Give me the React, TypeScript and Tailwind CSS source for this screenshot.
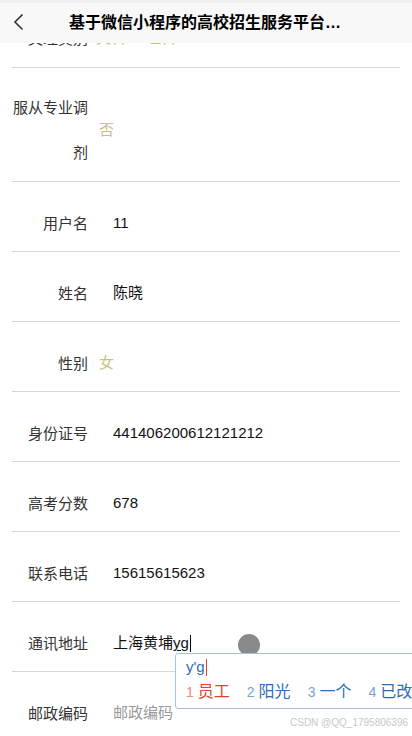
import React from 'react';

const FONT = '"Liberation Sans", "Noto Sans CJK SC", sans-serif';

type Row = { label: string; value?: string; kind: 'text' | 'radio' | 'placeholder' | 'address' };

const rows: Row[] = [
  { label: '用户名', value: '11', kind: 'text' },
  { label: '姓名', value: '陈晓', kind: 'text' },
  { label: '性别', value: '女', kind: 'radio' },
  { label: '身份证号', value: '441406200612121212', kind: 'text' },
  { label: '高考分数', value: '678', kind: 'text' },
  { label: '联系电话', value: '15615615623', kind: 'text' },
  { label: '通讯地址', value: '上海黄埔', kind: 'address' },
  { label: '邮政编码', value: '邮政编码', kind: 'placeholder' },
];

const Label = ({ children }: { children: React.ReactNode }) => (
  <div className="w-[76px] shrink-0 text-right text-[15px] leading-[45px] text-[#333]">{children}</div>
);

const FormRow = ({ row }: { row: Row }) => (
  <div className="flex items-center border-b border-[#d6d6d6] pt-[19px] pb-[5px]">
    <Label>{row.label}</Label>
    {row.kind === 'radio' && <span className="ml-[11px] text-[15px] text-[#c9c27f]">{row.value}</span>}
    {row.kind === 'text' && <span className="ml-[25px] text-[15px] text-[#111]">{row.value}</span>}
    {row.kind === 'placeholder' && <span className="ml-[25px] text-[15px] text-[#999]">{row.value}</span>}
    {row.kind === 'address' && (
      <span className="ml-[25px] flex items-center text-[15px] text-[#111]">
        {row.value}
        <span className="underline underline-offset-2">yg</span>
        <span className="ml-[1px] inline-block h-[17px] w-[1px] bg-black" />
      </span>
    )}
  </div>
);

export default function App() {
  return (
    <div className="relative h-[736px] w-[412px] overflow-hidden bg-white" style={{ fontFamily: FONT }}>
      <header className="absolute left-0 right-0 top-0 z-10 flex h-[43px] items-center border-t-[3px] border-[#efefef] bg-[#f8f8f8]">
        <svg className="absolute left-[12px] top-[10px]" width="14" height="18" viewBox="0 0 14 18" fill="none">
          <path d="M10.5 1.5 L3 9 L10.5 16.5" stroke="#333" strokeWidth="1.6" />
        </svg>
        <div className="mx-auto w-[274px] truncate text-[16px] font-bold text-black">
          基于微信小程序的高校招生服务平台管理系统
        </div>
      </header>

      <div className="mx-3 mt-[-3px]">
        <div className="flex items-center border-b border-[#d6d6d6] pt-[19px] pb-[6px]">
          <Label>文理类别</Label>
          <span className="ml-[8px] text-[15px] text-[#c9c27f]">文科</span>
          <span className="ml-[20px] text-[15px] text-[#c9c27f]">理科</span>
        </div>
        <div className="flex items-center border-b border-[#d6d6d6] pt-[17px] pb-[6px]">
          <Label>
            服从专业调
            <br />剂
          </Label>
          <span className="ml-[11px] text-[15px] text-[#c9c27f]">否</span>
        </div>
        {rows.map((r) => (
          <FormRow key={r.label} row={r} />
        ))}
      </div>

      <div className="absolute left-[238px] top-[634px] h-[22px] w-[22px] rounded-full bg-[#8a8a8a] blur-[0.6px]" />

      <div className="absolute left-[175px] top-[653px] h-[56px] w-[250px] rounded-[3px] border border-[#a9c1da] bg-white pl-[10px]">
        <div className="mt-[2px] flex items-center text-[15px] leading-[22px] text-[#2d6db5]">
          y'g
          <span className="ml-[1px] inline-block h-[17px] w-[1px] bg-[#e0452a]" />
        </div>
        <div className="mt-[2px] flex items-center whitespace-nowrap text-[16px] leading-[24px]">
          <span className="text-[14px] text-[#e88a74]">1</span>
          <span className="ml-[4px] text-[#e0452a]">员工</span>
          <span className="ml-[17px] text-[14px] text-[#7ba2cc]">2</span>
          <span className="ml-[4px] text-[#2d6db5]">阳光</span>
          <span className="ml-[17px] text-[14px] text-[#7ba2cc]">3</span>
          <span className="ml-[4px] text-[#2d6db5]">一个</span>
          <span className="ml-[17px] text-[14px] text-[#7ba2cc]">4</span>
          <span className="ml-[4px] text-[#2d6db5]">已改</span>
        </div>
      </div>

      <div className="absolute bottom-[6px] right-[4px] text-[10px] text-[#c8c8c8]">CSDN @QQ_1795806396</div>
    </div>
  );
}
